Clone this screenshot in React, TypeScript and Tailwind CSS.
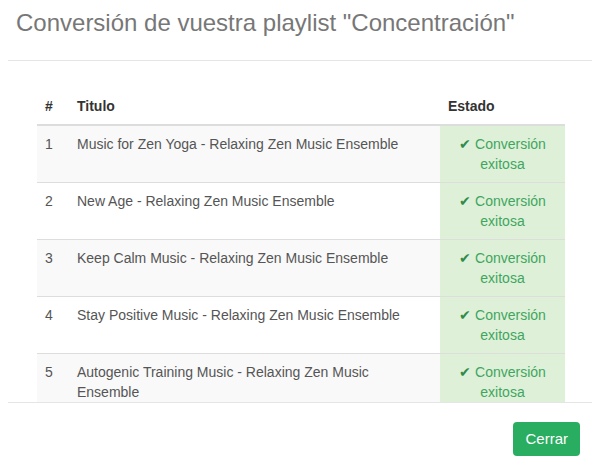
import React from 'react';

const tracks = [
  'Music for Zen Yoga - Relaxing Zen Music Ensemble',
  'New Age - Relaxing Zen Music Ensemble',
  'Keep Calm Music - Relaxing Zen Music Ensemble',
  'Stay Positive Music - Relaxing Zen Music Ensemble',
  'Autogenic Training Music - Relaxing Zen Music Ensemble',
];

const App = () => {
  return (
    <div
      className="w-[600px] h-[469px] bg-white overflow-hidden flex flex-col text-[14px] leading-[20px]"
      style={{ fontFamily: '"Liberation Sans", Arial, sans-serif' }}
    >
      {/* Header */}
      <div className="h-[60px] pl-[16px] pt-[10px] shrink-0">
        <h4 className="text-[24px] leading-[26px] text-[#777]">
          Conversión de vuestra playlist "Concentración"
        </h4>
      </div>
      <div className="mx-[8px] h-px bg-[#e5e5e5] shrink-0"></div>

      {/* Body */}
      <div className="h-[341px] shrink-0 overflow-hidden pl-[37px] pr-[35px] pt-[27px]">
        <table className="w-[528px] border-collapse table-fixed">
          <colgroup>
            <col className="w-[32px]" />
            <col className="w-[371px]" />
            <col className="w-[125px]" />
          </colgroup>
          <thead>
            <tr className="border-b-2 border-[#ddd]">
              <th className="text-left font-bold text-[#333] p-[8px]">#</th>
              <th className="text-left font-bold text-[#333] p-[8px]">Titulo</th>
              <th className="text-left font-bold text-[#333] p-[8px]">Estado</th>
            </tr>
          </thead>
          <tbody>
            {tracks.map((t, i) => (
              <tr
                key={i}
                className={(i > 0 ? 'border-t border-[#ddd] ' : '') + (i % 2 === 0 ? 'bg-[#f9f9f9]' : 'bg-white')}
              >
                <td className="p-[8px] align-top text-[#555]">{i + 1}</td>
                <td className="p-[8px] align-top text-[#555]">{t}</td>
                <td className="p-[8px] align-top text-center bg-[#dff0d8] text-[#3ea660]">
                  <span className="text-[#2e8b4a]">✔</span> Conversión exitosa
                </td>
              </tr>
            ))}
          </tbody>
        </table>
      </div>

      {/* Footer */}
      <div className="mx-[8px] h-px bg-[#e5e5e5] shrink-0"></div>
      <div className="flex justify-end pr-[20px] pt-[19px]">
        <button className="h-[34px] px-[12px] rounded-[4px] bg-[#29ad60] text-white text-[15px] leading-[20px]">
          Cerrar
        </button>
      </div>
    </div>
  );
};

export default App;
